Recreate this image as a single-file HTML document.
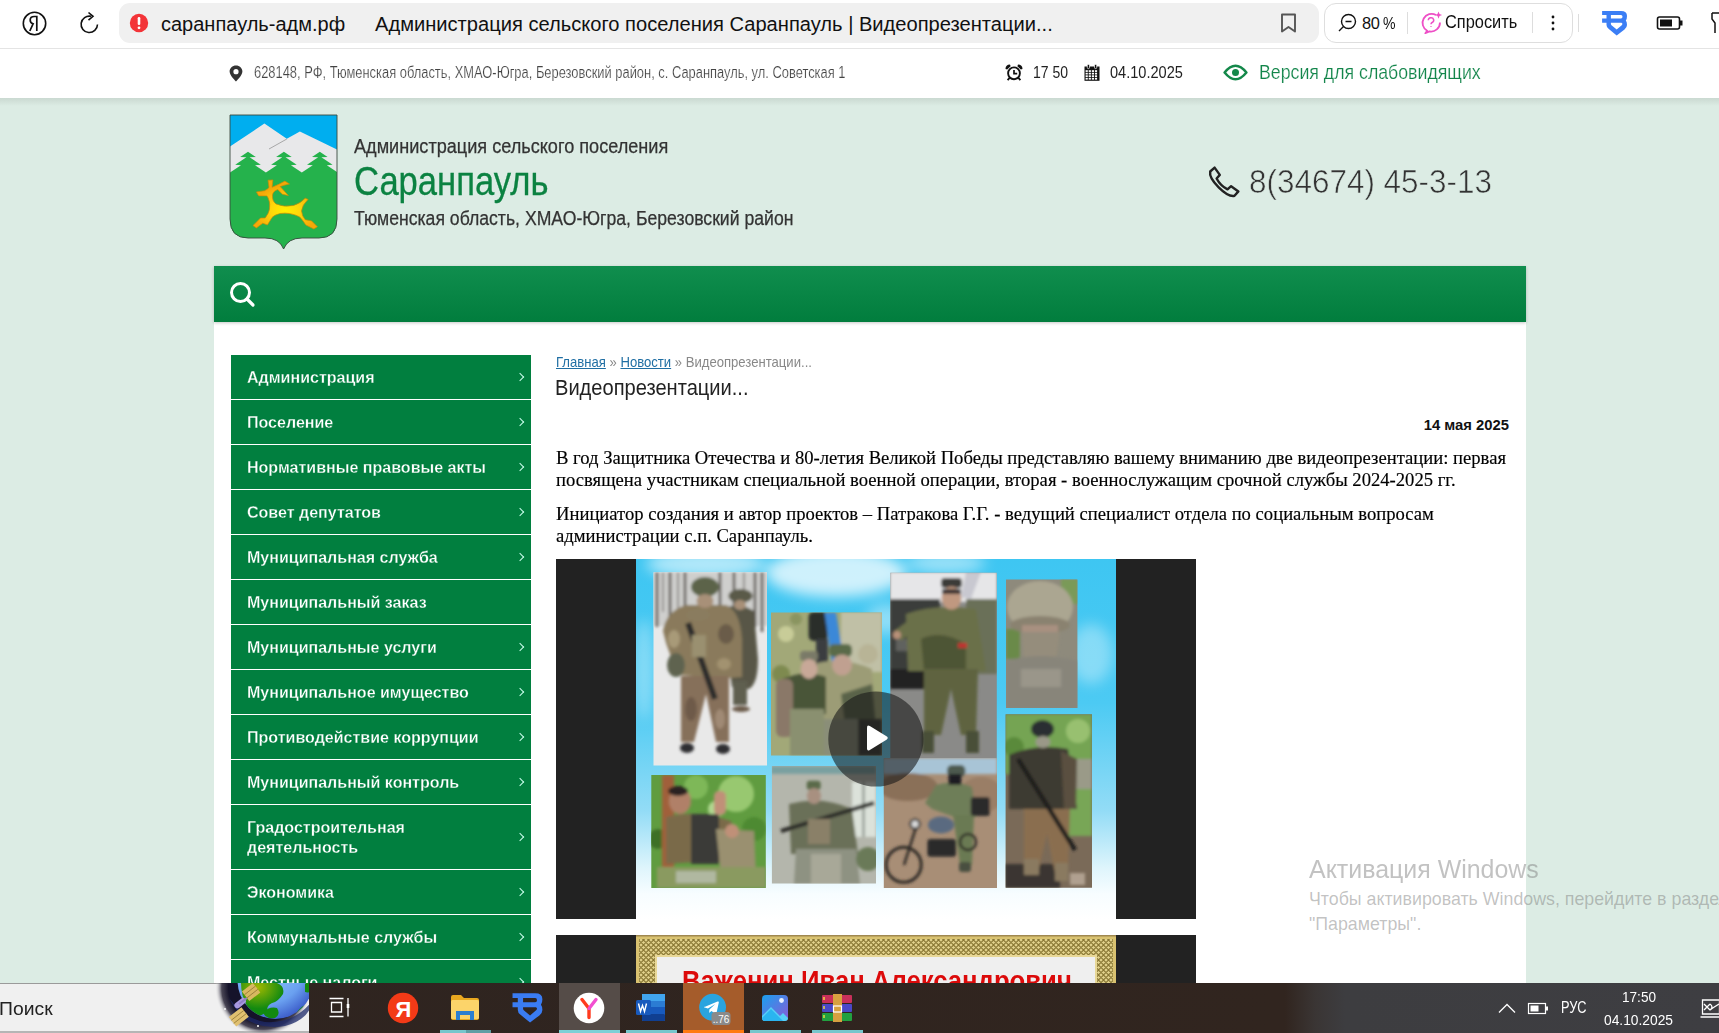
<!DOCTYPE html>
<html lang="ru"><head><meta charset="utf-8"><title>Саранпауль</title>
<style>
*{margin:0;padding:0;box-sizing:border-box}
html,body{width:1719px;height:1033px;overflow:hidden;background:#dcece4;font-family:"Liberation Sans",sans-serif;position:relative}
.a{position:absolute;white-space:nowrap}
.sx{transform-origin:0 0}
svg{display:block}
#chrome{left:0;top:0;width:1719px;height:49px;background:#fff;border-bottom:1px solid #e4e4e4}
#addr{left:119px;top:3px;width:1200px;height:40px;background:#f0f0f0;border-radius:11px}
#pill{left:1324px;top:3px;width:249px;height:40px;border:1px solid #dedede;border-radius:12px;background:#fff}
#info{left:0;top:49px;width:1719px;height:49px;background:#fff}
#ish{left:0;top:98px;width:1719px;height:8px;background:linear-gradient(#cad9d1,#dcece4)}
#nav{left:214px;top:266px;width:1312px;height:56px;background:linear-gradient(#108e4e,#017d3d);box-shadow:0 1px 3px rgba(0,0,0,.22);z-index:1}
#wrap{left:214px;top:322px;width:1312px;height:700px;background:#fff}
.menu{left:231px;top:355px;width:300px}
.mi{position:relative;background:#017f3f;color:#fff;font-size:17px;font-weight:bold;height:44px;margin-bottom:1px;padding-left:16px;padding-top:13px;line-height:20px}
.mi span{display:inline-block;transform:scaleX(0.943);transform-origin:0 0;white-space:nowrap;-webkit-text-stroke:0.3px #017f3f}
.mi:after{content:"";position:absolute;right:8px;top:19px;width:5px;height:5px;border-right:1px solid #cfe;border-top:1px solid #cfe;transform:rotate(45deg)}
.mi.nochev:after{display:none}
.mi.two{height:64px;padding-top:13px}
.mi.two:after{top:29px}
.p{font-family:"Liberation Serif",serif;font-size:18px;color:#000;-webkit-text-stroke:0.15px #000;transform:scaleX(1.035);transform-origin:0 0}
#taskbar{left:0;top:983px;width:1719px;height:50px;background:linear-gradient(90deg,#2e2420 0,#31251f 1285px,#3a3534 1315px,#3d3d40 1345px,#3e3e42 100%)}
</style></head><body>
<!-- Browser chrome -->
<div id="chrome" class="a"></div>
<svg class="a" style="left:21px;top:10px" width="28" height="28" viewBox="0 0 28 28"><circle cx="13.5" cy="13.5" r="11.2" fill="none" stroke="#111" stroke-width="1.6"/><path d="M15.8 21V6.5h-2.6c-2.6 0-4 1.4-4 3.6 0 2 1.1 3.3 2.9 3.8L8.8 21" fill="none" stroke="#111" stroke-width="1.7"/></svg>
<svg class="a" style="left:77px;top:11px" width="26" height="26" viewBox="0 0 26 26"><path d="M20.5 13.5A8.2 8.2 0 1 1 14 5.3" fill="none" stroke="#111" stroke-width="1.6"/><path d="M11.5 1.5l4.5 3.8-4.5 3.8" fill="none" stroke="#111" stroke-width="1.6"/></svg>
<div id="addr" class="a"></div>
<svg class="a" style="left:129px;top:13px" width="20" height="20" viewBox="0 0 20 20"><circle cx="10" cy="10" r="9.2" fill="#f33438"/><rect x="8.7" y="4" width="2.6" height="8" rx="1.2" fill="#fff"/><circle cx="10" cy="14.8" r="1.4" fill="#fff"/></svg>
<div class="a" style="left:161px;top:13px;font-size:20px;color:#111">саранпауль-адм.рф</div>
<div class="a" style="left:375px;top:13px;font-size:20.12px;color:#111">Администрация сельского поселения Саранпауль | Видеопрезентации...</div>
<svg class="a" style="left:1279px;top:12px" width="20" height="22" viewBox="0 0 20 22"><path d="M3 2.5h13v17l-6.5-4.5L3 19.5z" fill="none" stroke="#555" stroke-width="1.9" stroke-linejoin="round"/></svg>
<div id="pill" class="a"></div>
<svg class="a" style="left:1337px;top:12px" width="22" height="22" viewBox="0 0 22 22"><circle cx="11.5" cy="9.5" r="7" fill="none" stroke="#111" stroke-width="1.4"/><path d="M8.5 9.5h6M6.5 14.5l-4.5 4.5" stroke="#111" stroke-width="1.4"/></svg>
<div class="a" style="left:1362px;top:13.5px;font-size:16.4px;color:#111;letter-spacing:-0.3px">80<span style="margin-left:3px;display:inline-block;transform:scaleX(0.86);transform-origin:0 0">%</span></div>
<div class="a" style="left:1407px;top:12px;width:1px;height:22px;background:#ddd"></div>
<svg class="a" style="left:1417px;top:9px" width="28" height="28" viewBox="0 0 28 28"><path d="M19 6A9 9 0 1 0 10.2 21.8L8.3 24.2 12.5 22.4A9 9 0 0 0 23 13.5" fill="none" stroke="#ee4fc6" stroke-width="1.8" stroke-linejoin="round"/><path d="M11.3 11.2a2.7 2.5 0 1 1 3.8 2.3c-.8.4-1.1.8-1.1 1.7M14 17.2v.9" fill="none" stroke="#ee4fc6" stroke-width="1.5"/><path d="M21.5 2.5l1 2.6 2.6 1-2.6 1-1 2.6-1-2.6-2.6-1 2.6-1z" fill="#ee4fc6"/></svg>
<div class="a sx" style="left:1445px;top:12.2px;font-size:17.7px;color:#111;transform:scaleX(0.926)">Спросить</div>
<div class="a" style="left:1532px;top:12px;width:1px;height:21px;background:#ddd"></div>
<svg class="a" style="left:1549px;top:14px" width="8" height="18" viewBox="0 0 8 18"><circle cx="4" cy="3" r="1.4" fill="#111"/><circle cx="4" cy="9" r="1.4" fill="#111"/><circle cx="4" cy="15" r="1.4" fill="#111"/></svg>
<div class="a" style="left:1578px;top:14px;width:1px;height:18px;background:#ddd"></div>
<svg class="a" style="left:1595px;top:5px" width="40" height="35" viewBox="0 0 40 35"><path fill-rule="evenodd" fill="#3b7ef5" d="M7.1,6.1H26Q32,6.1 32,11Q32,14 30.8,15.6Q32,17 32,20Q32,22.5 29.5,24.5L21.7,30.5L13.8,24Q11.5,22.5 11.5,20V17.8H7.1V13.6H11.5V10H7.1ZM15.9,10H26Q27.5,10 27.5,11.8Q27.5,13.6 26,13.6H15.9ZM15.9,17.8H26.5Q28.2,18.6 27,20L21.7,24.5L16.5,20.2Q15.9,19.6 15.9,19Z"/></svg>
<svg class="a" style="left:1656px;top:16px" width="28" height="14" viewBox="0 0 28 14"><rect x="1.5" y="1" width="22" height="12" rx="2" fill="none" stroke="#111" stroke-width="1.6"/><rect x="4" y="3.5" width="12" height="7" fill="#111"/><rect x="24" y="4.5" width="2.5" height="5" fill="#111"/></svg>
<svg class="a" style="left:1710px;top:11px" width="9" height="24" viewBox="0 0 9 24"><path d="M2 2h7M2 2v6l3 4v10" fill="none" stroke="#111" stroke-width="1.5"/></svg>

<!-- Info bar -->
<div id="info" class="a"></div>
<div id="ish" class="a"></div>
<svg class="a" style="left:229px;top:65px" width="14" height="17" viewBox="0 0 14 17"><path d="M7 0.5C3.4 0.5 0.6 3.2 0.6 6.6 0.6 10.6 7 16.5 7 16.5s6.4-5.9 6.4-9.9C13.4 3.2 10.6 0.5 7 0.5zm0 3.6a2.6 2.6 0 1 1 0 5.2 2.6 2.6 0 0 1 0-5.2z" fill="#333"/></svg>
<div class="a sx" style="left:254px;top:64.2px;font-size:16px;color:#444;transform:scaleX(0.806);-webkit-text-stroke:0.2px #fff">628148, РФ, Тюменская область, ХМАО-Югра, Березовский район, с. Саранпауль, ул. Советская 1</div>
<svg class="a" style="left:1005px;top:64px" width="18" height="17" viewBox="0 0 18 17"><circle cx="9" cy="9.3" r="5.9" fill="none" stroke="#111" stroke-width="1.9"/><path d="M9 6v3.7h3.2" fill="none" stroke="#111" stroke-width="1.7"/><path d="M0.5 5A4.6 4.6 0 0 1 5 0.5L5.6 2.2 2.2 5.6z" fill="#111"/><path d="M17.5 5A4.6 4.6 0 0 0 13 0.5L12.4 2.2 15.8 5.6z" fill="#111"/><path d="M4.6 13.8l-2 2.4M13.4 13.8l2 2.4" stroke="#111" stroke-width="1.8"/></svg>
<div class="a sx" style="left:1033px;top:64.2px;font-size:16px;color:#222;transform:scaleX(0.875)">17 50</div>
<svg class="a" style="left:1084px;top:64px" width="16" height="17" viewBox="0 0 16 17"><rect x="0.5" y="2.5" width="15" height="14.3" fill="#111"/><rect x="1.6" y="6.20" width="2.2" height="1.75" fill="#fff"/><rect x="1.6" y="8.75" width="2.2" height="1.75" fill="#fff"/><rect x="1.6" y="11.30" width="2.2" height="1.75" fill="#fff"/><rect x="1.6" y="13.85" width="2.2" height="1.75" fill="#fff"/><rect x="4.7" y="6.20" width="2.2" height="1.75" fill="#fff"/><rect x="4.7" y="8.75" width="2.2" height="1.75" fill="#fff"/><rect x="4.7" y="11.30" width="2.2" height="1.75" fill="#fff"/><rect x="4.7" y="13.85" width="2.2" height="1.75" fill="#fff"/><rect x="7.8" y="6.20" width="2.2" height="1.75" fill="#fff"/><rect x="7.8" y="8.75" width="2.2" height="1.75" fill="#fff"/><rect x="7.8" y="11.30" width="2.2" height="1.75" fill="#fff"/><rect x="7.8" y="13.85" width="2.2" height="1.75" fill="#fff"/><rect x="10.9" y="6.20" width="2.2" height="1.75" fill="#fff"/><rect x="10.9" y="8.75" width="2.2" height="1.75" fill="#fff"/><rect x="10.9" y="11.30" width="2.2" height="1.75" fill="#fff"/><rect x="10.9" y="13.85" width="2.2" height="1.75" fill="#fff"/><rect x="3.3" y="0.4" width="2.2" height="4.2" rx="1" fill="#111" stroke="#fff" stroke-width="0.7"/><rect x="10.5" y="0.4" width="2.2" height="4.2" rx="1" fill="#111" stroke="#fff" stroke-width="0.7"/></svg>
<div class="a sx" style="left:1110px;top:64.2px;font-size:16px;color:#222;transform:scaleX(0.91)">04.10.2025</div>
<svg class="a" style="left:1223px;top:64px" width="25" height="17" viewBox="0 0 25 17"><path d="M1.6 8.5Q12.5 -5 23.4 8.5Q12.5 22 1.6 8.5z" fill="none" stroke="#14884a" stroke-width="2.5" stroke-linejoin="round"/><circle cx="12.5" cy="8.5" r="3.5" fill="#14884a"/></svg>
<div class="a sx" style="left:1259px;top:61px;font-size:20.3px;color:#12854a;transform:scaleX(0.874);-webkit-text-stroke:0.2px #fff">Версия для слабовидящих</div>

<!-- Header -->
<svg class="a" style="left:229px;top:114px" width="110" height="137" viewBox="-1 -1 110 137">
<defs><clipPath id="sh"><path d="M0,0H107V104Q107,123 89,123H72Q58,123 53.6,134Q49.5,123 35,123H18Q0,123 0,104Z"/></clipPath>
<radialGradient id="gold" cx="0.5" cy="0.62" r="0.5"><stop offset="0" stop-color="#fff000"/><stop offset="0.45" stop-color="#ffd60a"/><stop offset="1" stop-color="#f5a808"/></radialGradient></defs>
<g clip-path="url(#sh)">
<rect x="0" y="0" width="108" height="136" fill="#25b24c"/>
<rect x="0" y="0" width="108" height="60" fill="#00aeef"/>
<path d="M0,31.4L34.4,8.6L56.8,23.7L69.9,16.6L108,35V60H0Z" fill="#e8e8ea"/>
<path d="M39,34L56.8,24" stroke="#7a7a7a" stroke-width="0.6"/>
<path d="M0,57.4 L11.0,50.2 L5.2,49.7 L16.4,42.3 L10.2,42.1 L18.0,36.7 L25.8,42.1 L19.6,42.3 L30.8,49.7 L25.0,50.2 L35.9,57.4 L46.9,50.2 L41.1,49.7 L52.3,42.3 L46.1,42.1 L53.9,36.7 L61.7,42.1 L55.5,42.3 L66.7,49.7 L60.9,50.2 L71.8,57.4 L82.8,50.2 L77.0,49.7 L88.2,42.3 L82.0,42.1 L89.8,36.7 L97.6,42.1 L91.4,42.3 L102.6,49.7 L96.8,50.2 L107.7,57.4 L108,57 V136 H0 Z" fill="#25b24c"/>
</g>
<path d="M0,0H107V104Q107,123 89,123H72Q58,123 53.6,134Q49.5,123 35,123H18Q0,123 0,104Z" fill="none" stroke="#3b4a3f" stroke-width="0.9"/>
<path d="M26.4,76.9L34.5,75.7Q38,74 39,72.5L38,65.2L42.9,64.9L42.1,72.2Q48,70 54.9,66.1L59.5,69Q54,70 50.2,71.6L58.4,80.6L52.5,79.2Q49,76 47.9,74.5Q43,76 42.5,80Q42,86 46,89Q54,92.5 63.6,90.5Q71,88 75.2,83.2L78.1,84.4Q72,90 71.5,96Q72,101 75.2,104.7L81.6,105.9L87.4,111.7L83.9,114L75.8,110Q72,104 69.4,101.8Q60,97 50.2,98.5Q44,100 42.1,102.4L37.4,110L32.8,108.2L26.4,112.9L22.9,110.6L30.5,103L35.1,103Q39,98 39.5,94Q40,88 39.2,86.1Q38,82 36.9,80.9L28.7,80.9Z" fill="url(#gold)" stroke="#c98a06" stroke-width="0.7" stroke-linejoin="round"/>
</svg>
<div class="a sx" style="left:353.9px;top:135.3px;font-size:19.4px;color:#333;transform:scaleX(0.934);-webkit-text-stroke:0.25px #333">Администрация сельского поселения</div>
<div class="a sx" style="left:353.9px;top:158.6px;font-size:40px;color:#0b8241;transform:scaleX(0.865);-webkit-text-stroke:0.3px #0b8241">Саранпауль</div>
<div class="a sx" style="left:353.9px;top:207px;font-size:19.4px;color:#333;transform:scaleX(0.909);-webkit-text-stroke:0.25px #333">Тюменская область, ХМАО-Югра, Березовский район</div>
<svg class="a" style="left:1206px;top:165px" width="35" height="35" viewBox="0 0 35 35"><path d="M4.2 6.5L8.6 2.6l5.2 7.3-3.2 3.6c2.3 4.4 6.5 8.6 10.9 10.9l3.6-3.2 7.3 5.2-3.9 4.4C20.5 32.6 2.4 14.5 4.2 6.5z" fill="none" stroke="#222" stroke-width="2.4" stroke-linejoin="round"/></svg>
<div class="a sx" style="left:1249px;top:162.8px;font-size:32.9px;color:#333;font-weight:normal;transform:scaleX(0.956);-webkit-text-stroke:0.6px #dcece4">8(34674) 45-3-13</div>

<!-- Nav -->
<div id="nav" class="a"></div>
<svg class="a" style="left:228px;top:280px;z-index:2" width="28" height="28" viewBox="0 0 28 28"><circle cx="12.5" cy="12.5" r="9" fill="none" stroke="#fff" stroke-width="3"/><path d="M19 19l6 6" stroke="#fff" stroke-width="3.2" stroke-linecap="round"/></svg>

<!-- Content wrap -->
<div id="wrap" class="a"></div>
<div class="a menu">
<div class="mi"><span>Администрация</span></div>
<div class="mi"><span>Поселение</span></div>
<div class="mi"><span>Нормативные правовые акты</span></div>
<div class="mi"><span>Совет депутатов</span></div>
<div class="mi"><span>Муниципальная служба</span></div>
<div class="mi nochev"><span>Муниципальный заказ</span></div>
<div class="mi"><span>Муниципальные услуги</span></div>
<div class="mi"><span>Муниципальное имущество</span></div>
<div class="mi"><span>Противодействие коррупции</span></div>
<div class="mi"><span>Муниципальный контроль</span></div>
<div class="mi two"><span>Градостроительная<br>деятельность</span></div>
<div class="mi"><span>Экономика</span></div>
<div class="mi"><span>Коммунальные службы</span></div>
<div class="mi"><span>Местные налоги</span></div>
</div>

<div class="a sx" style="left:556px;top:354px;font-size:13.9px;color:#888;transform:scaleX(0.943)"><span style="color:#1f6ea3;text-decoration:underline">Главная</span> » <span style="color:#1f6ea3;text-decoration:underline">Новости</span> » Видеопрезентации...</div>
<div class="a sx" style="left:555px;top:376.2px;font-size:21.3px;color:#222;transform:scaleX(0.943)">Видеопрезентации...</div>
<div class="a" style="right:210px;top:417.2px;font-size:14.8px;font-weight:bold;color:#111">14 мая 2025</div>
<div class="a p" style="left:556px;top:447.8px">В год Защитника Отечества и 80-летия Великой Победы представляю вашему вниманию две видеопрезентации: первая</div>
<div class="a p" style="left:556px;top:469.8px">посвящена участникам специальной военной операции, вторая - военнослужащим срочной службы 2024-2025 гг.</div>
<div class="a p" style="left:556px;top:504.2px">Инициатор создания и автор проектов – Патракова Г.Г. - ведущий специалист отдела по социальным вопросам</div>
<div class="a p" style="left:556px;top:526.1px">администрации с.п. Саранпауль.</div>

<!-- Video 1 -->
<div class="a" style="left:556px;top:559px;width:640px;height:360px;background:#222"></div>
<svg class="a" style="left:636px;top:559px" width="480" height="360" viewBox="0 0 480 360">
<defs>
<linearGradient id="sky" x1="0" y1="0" x2="0" y2="1"><stop offset="0" stop-color="#3ec6f2"/><stop offset="0.4" stop-color="#4ccaf3"/><stop offset="0.7" stop-color="#93dcf6"/><stop offset="0.86" stop-color="#dff5fc"/><stop offset="0.93" stop-color="#f7fdff"/><stop offset="1" stop-color="#ffffff"/></linearGradient>
<filter id="bl" x="-20%" y="-20%" width="140%" height="140%"><feGaussianBlur stdDeviation="1.6"/></filter>
<filter id="bl2" x="-50%" y="-50%" width="200%" height="200%"><feGaussianBlur stdDeviation="7"/></filter>
<clipPath id="c1"><rect x="17.5" y="13.3" width="113.5" height="193.2"/></clipPath>
<clipPath id="c2"><rect x="135" y="53.4" width="111" height="143"/></clipPath>
<clipPath id="c3"><rect x="254.3" y="13.7" width="106.5" height="185.2"/></clipPath>
<clipPath id="c4"><rect x="370" y="20.6" width="71.4" height="128.4"/></clipPath>
<clipPath id="c5"><rect x="15.3" y="216" width="114.5" height="113"/></clipPath>
<clipPath id="c6"><rect x="135.9" y="207" width="104.1" height="117.6"/></clipPath>
<clipPath id="c7"><rect x="247.8" y="199" width="113.2" height="130"/></clipPath>
<clipPath id="c8"><rect x="369.6" y="155.3" width="86.4" height="173.4"/></clipPath>
</defs>
<rect width="480" height="360" fill="url(#sky)"/>
<g filter="url(#bl2)" fill="#fff">
<ellipse cx="70" cy="5" rx="60" ry="14" opacity=".6"/><ellipse cx="200" cy="14" rx="70" ry="24" opacity=".75"/><ellipse cx="310" cy="4" rx="40" ry="10" opacity=".5"/><ellipse cx="455" cy="95" rx="22" ry="30" opacity=".35"/><ellipse cx="8" cy="110" rx="10" ry="50" opacity=".35"/><ellipse cx="250" cy="60" rx="20" ry="15" opacity=".4"/>
</g>
<!-- photo 1 snow -->
<g clip-path="url(#c1)">
<rect x="17" y="13" width="115" height="194" fill="#e9e9e9"/>
<g filter="url(#bl)">
<rect x="17" y="13" width="115" height="54" fill="#cfcfcd"/>
<path d="M21 13v55M34 13v50M49 13v45M84 13v50M98 13v45M119 13v55M126 13v60" stroke="#5e5a55" stroke-width="2.6"/>
<path d="M27 13v40M42 13v38M108 13v40" stroke="#8a8682" stroke-width="1.8"/>
<path d="M91 48Q106 44 118 52L122 100Q122 125 113 130L96 128Q90 90 91 48z" fill="#585646"/>
<rect x="97" y="122" width="14" height="24" fill="#5e5e50"/>
<ellipse cx="105" cy="150" rx="9" ry="3" fill="#6a5a4a"/>
<path d="M27 72Q30 52 50 46L90 46Q104 52 106 80L106 118Q90 120 70 118L45 116Q32 96 27 72z" fill="#8a7a5c"/>
<path d="M45 117H93L93 183H80L70 135L58 183H45z" fill="#86705a"/>
<path d="M52 64L79 140" stroke="#2a2a2a" stroke-width="6"/><rect x="56" y="76" width="14" height="22" fill="#9a9070"/>
<ellipse cx="40" cy="106" rx="9" ry="12" fill="#5e6450"/>
<ellipse cx="90" cy="75" rx="8" ry="10" fill="#6a5c48"/><ellipse cx="38" cy="80" rx="6" ry="9" fill="#a89a78"/><ellipse cx="88" cy="105" rx="7" ry="6" fill="#a29270"/><ellipse cx="55" cy="150" rx="6" ry="12" fill="#6e5a4a"/><ellipse cx="84" cy="160" rx="5" ry="10" fill="#a08a74"/><ellipse cx="62" cy="56" rx="12" ry="6" fill="#8a7c5e"/>
<ellipse cx="104.5" cy="37" rx="12" ry="7" fill="#5a5a48"/><ellipse cx="104" cy="46" rx="6" ry="5" fill="#a89078"/>
<ellipse cx="69" cy="28" rx="14" ry="10" fill="#5c6448"/>
<ellipse cx="69" cy="42" rx="8.5" ry="7" fill="#a89078"/>
<ellipse cx="51" cy="189" rx="7" ry="5" fill="#2f2f33"/><ellipse cx="87" cy="190" rx="7" ry="5" fill="#2f2f33"/>
</g></g>
<!-- photo 2 two men -->
<g clip-path="url(#c2)">
<rect x="135" y="53" width="111" height="144" fill="#a2a878"/>
<g filter="url(#bl)">
<rect x="205" y="53" width="41" height="60" fill="#c0c0a6"/>
<circle cx="150" cy="75" r="8" fill="#c8cc98"/><circle cx="145" cy="115" r="9" fill="#7e8a50"/><circle cx="232" cy="95" r="10" fill="#b8b496"/><circle cx="160" cy="60" r="6" fill="#8a9460"/>
<rect x="172.6" y="53" width="19" height="29" rx="5" fill="#2c2e2c"/>
<rect x="180" y="80" width="12" height="30" fill="#3a3c40"/>
<path d="M188.6 53.4H200L207.5 100L196 104z" fill="#3a88d8"/>
<path d="M181 104Q210 98 236 110L240 170H181z" fill="#9c9c76"/>
<path d="M205 135L236 125L240 170L210 175z" fill="#5a6448"/>
<path d="M146 120Q170 110 190 118L190 155L148 155z" fill="#4a5438"/>
<rect x="140" y="120" width="17" height="58" rx="6" fill="#8a7868"/>
<rect x="154" y="150" width="34" height="47" fill="#8a9070"/>
<rect x="188" y="160" width="40" height="37" fill="#8a8e78"/>
<rect x="222" y="160" width="24" height="37" fill="#3a3a34"/>
<rect x="164" y="92" width="18" height="10" rx="4" fill="#7a7a68"/>
<ellipse cx="173" cy="110" rx="8.5" ry="10" fill="#c8a898"/>
<rect x="193" y="85" width="23" height="13" rx="5" fill="#5a6a48"/>
<ellipse cx="206" cy="106" rx="10" ry="10.5" fill="#c0a090"/>
</g></g>
<!-- photo 3 glasses man -->
<g clip-path="url(#c3)">
<rect x="254" y="13" width="107" height="186" fill="#8a8a88"/>
<g filter="url(#bl)">
<rect x="254" y="13" width="107" height="30" fill="#e6e6e8"/>
<path d="M330 13L345 13L335 40L325 38z" fill="#c8c8d0"/>
<rect x="254" y="40" width="50" height="88" fill="#3a3c3a"/>
<rect x="260" y="80" width="30" height="12" fill="#60625e"/>
<rect x="330" y="40" width="31" height="75" fill="#6a7058"/>
<rect x="254" y="110" width="35" height="20" fill="#222"/>
<path d="M270 55Q300 44 340 50L350 112L272 112z" fill="#6a7048"/>
<path d="M285 80Q305 70 330 85L330 112L288 112z" fill="#4e5434"/>
<path d="M258 72L275 60L280 70L265 82z" fill="#6a7048"/>
<circle cx="261" cy="76" r="4" fill="#b89078"/>
<path d="M288 110H342L340 176H325L315 130L305 176H288z" fill="#5e6440"/>
<rect x="322" y="84" width="9" height="5" fill="#c03030"/>
<rect x="286" y="172" width="12" height="22" fill="#4a5038"/><rect x="330" y="172" width="13" height="22" fill="#4a5038"/>
<rect x="305" y="19" width="21" height="10" rx="4" fill="#3a3a38"/>
<ellipse cx="315.5" cy="39" rx="10" ry="11.5" fill="#c09880"/>
<rect x="306" y="30" width="19" height="5" fill="#3a3030"/>
</g></g>
<!-- photo 4 masked -->
<g clip-path="url(#c4)">
<rect x="370" y="20" width="72" height="130" fill="#8e8a7c"/>
<g filter="url(#bl)">
<rect x="425" y="20" width="17" height="25" fill="#7a9a58"/>
<rect x="370" y="70" width="14" height="30" fill="#6a8a48"/>
<ellipse cx="404" cy="48" rx="33" ry="26" fill="#aba691"/>
<ellipse cx="404" cy="66" rx="30" ry="9" fill="#8a8270"/>
<rect x="386" y="66" width="36" height="7" fill="#a89080"/>
<path d="M386 73H424L420 100Q404 108 388 100z" fill="#958d7c"/>
<path d="M370 102Q404 92 442 102V150H370z" fill="#88857a"/>
<rect x="385" y="110" width="40" height="18" fill="#9a968a"/>
</g></g>
<!-- photo 5 V sign -->
<g clip-path="url(#c5)">
<rect x="15" y="216" width="115" height="113" fill="#609c40"/>
<g filter="url(#bl)">
<circle cx="100" cy="235" r="18" fill="#98c870"/><circle cx="60" cy="228" r="12" fill="#7eb858"/><circle cx="118" cy="270" r="12" fill="#4e8a30"/><circle cx="22" cy="280" r="10" fill="#3e7028"/><circle cx="80" cy="250" r="8" fill="#b0d890"/>
<rect x="26" y="216" width="12" height="100" fill="#a0603a"/>
<path d="M30 258Q60 250 95 262L108 300L30 305z" fill="#7a6a48"/>
<rect x="55" y="255" width="28" height="50" fill="#3a3a38"/>
<path d="M80 270L118 272L120 316L85 316z" fill="#9a9070"/>
<circle cx="96" cy="272" r="7" fill="#c09078"/>
<ellipse cx="44" cy="242" rx="11" ry="13" fill="#b08068"/>
<ellipse cx="42" cy="232" rx="10" ry="5" fill="#2a2420"/>
<rect x="78" y="232" width="12" height="24" rx="5" fill="#c09078"/>
<rect x="21" y="308" width="109" height="21" fill="#8a9a60"/>
<rect x="40" y="312" width="40" height="12" fill="#b0b8a0"/>
</g></g>
<!-- photo 6 room -->
<g clip-path="url(#c6)">
<rect x="135" y="207" width="105" height="118" fill="#b4b6ac"/>
<g filter="url(#bl)">
<rect x="135" y="207" width="105" height="8" fill="#7aa0a0"/>
<rect x="216" y="223" width="24" height="55" fill="#dce2da"/>
<rect x="226" y="223" width="3" height="55" fill="#a0a8a0"/>
<path d="M153 245Q185 236 216 250L222 295H155z" fill="#6a7058"/>
<path d="M160 290H220L224 325H158z" fill="#8e9282"/>
<rect x="175" y="295" width="30" height="30" fill="#a8a898"/>
<path d="M145 272L238 244" stroke="#2a2a28" stroke-width="4"/>
<rect x="172" y="260" width="22" height="25" fill="#8a8068"/>
<rect x="170.7" y="221.8" width="14" height="9" rx="3" fill="#5a6a48"/>
<ellipse cx="178" cy="237" rx="7" ry="8" fill="#a89080"/>
<circle cx="232" cy="300" r="12" fill="#6a7a58"/>
</g></g>
<!-- photo 7 motorcycle -->
<g clip-path="url(#c7)">
<rect x="247" y="199" width="114" height="130" fill="#a88e76"/>
<g filter="url(#bl)">
<rect x="247" y="199" width="114" height="16" fill="#a8c4d6"/>
<ellipse cx="272" cy="228" rx="30" ry="14" fill="#8a7058"/>
<ellipse cx="345" cy="236" rx="22" ry="18" fill="#9a7e66"/>
<path d="M300 226Q318 220 336 228L340 258H318L296 250L289 244z" fill="#6e7e58"/>
<path d="M317 256H338L336 306H324z" fill="#6a7a52"/>
<rect x="323" y="303" width="12" height="10" rx="3" fill="#4a5040"/>
<path d="M268 306L282 262" stroke="#2e2a26" stroke-width="2.5"/>
<circle cx="267.7" cy="305.8" r="17.5" fill="none" stroke="#2e2a26" stroke-width="3"/>
<circle cx="332" cy="283" r="8" fill="none" stroke="#2e2a26" stroke-width="2.5"/>
<rect x="291.4" y="280" width="28.6" height="17.7" rx="3" fill="#2a2a2a"/>
<ellipse cx="305" cy="266" rx="13" ry="8.5" fill="#5a6a80"/>
<circle cx="279" cy="265" r="5.5" fill="#2a2a2e"/><circle cx="279" cy="265" r="3.5" fill="#d8d8d8"/>
<rect x="334.8" y="238" width="19" height="19" rx="3" fill="#2a2a2c"/>
<rect x="311" y="206" width="18.4" height="11.7" rx="5" fill="#4e5a50"/>
<rect x="312.5" y="215" width="12.8" height="10.8" fill="#1a1a22"/>
</g></g>
<!-- photo 8 rifle soldier -->
<g clip-path="url(#c8)">
<rect x="369" y="155" width="87" height="174" fill="#7a6a58"/>
<g filter="url(#bl)">
<rect x="369" y="155" width="87" height="60" fill="#74a452"/>
<circle cx="442" cy="172" r="12" fill="#98c070"/><circle cx="378" cy="188" r="10" fill="#5a8a3a"/>
<rect x="431" y="215" width="25" height="62" fill="#78a656"/>
<rect x="436" y="200" width="20" height="30" fill="#9a9a88"/>
<rect x="369" y="305" width="55" height="24" fill="#3a3632"/>
<rect x="434" y="314" width="15" height="12" fill="#b0a090"/>
<path d="M373 196Q400 184 432 190L441 250H373z" fill="#3e3a30"/>
<path d="M425 192L441 200L440 250L428 250z" fill="#5a5040"/>
<path d="M388 250H434L432 314H419L411 275L402 314H388z" fill="#8a6e50"/>
<rect x="388" y="300" width="15" height="16" fill="#8a7a60"/><rect x="419" y="304" width="13" height="18" fill="#8a7a60"/>
<ellipse cx="406.5" cy="170" rx="11.5" ry="9" fill="#2a2e30"/>
<ellipse cx="407" cy="183" rx="7.5" ry="6" fill="#9a9888"/>
<path d="M382 200L439 291" stroke="#1a1a1a" stroke-width="4.5"/>
</g></g>
<!-- play button -->
<circle cx="239.9" cy="180" r="47.6" fill="rgba(22,22,22,0.58)"/>
<path d="M231 168.5Q231 165.5 233.8 167L250.5 177.3Q253 179 250.5 180.7L233.8 191Q231 192.5 231 189.5Z" fill="#fff"/>
</svg>

<!-- Video 2 -->
<div class="a" style="left:556px;top:935px;width:640px;height:60px;background:#222"></div>
<svg class="a" style="left:636px;top:935px" width="480" height="48" viewBox="0 0 480 48">
<defs><pattern id="orn" width="5" height="5" patternUnits="userSpaceOnUse"><rect width="5" height="5" fill="#e2d28c"/><path d="M0 2.5L2.5 0 5 2.5 2.5 5z" fill="none" stroke="#8a7834" stroke-width="1.1"/></pattern></defs>
<rect width="480" height="48" fill="#d9c270"/>
<rect x="0" y="0" width="480" height="1.5" fill="#a08850"/>
<rect x="3" y="4" width="474" height="16" fill="url(#orn)"/>
<rect x="3" y="4" width="16" height="44" fill="url(#orn)"/>
<rect x="461" y="4" width="16" height="44" fill="url(#orn)"/>
<rect x="19" y="20" width="442" height="28" fill="#e8d898"/>
<rect x="21" y="22" width="438" height="26" fill="#efefef"/>
</svg>
<div class="a sx" style="left:681.8px;top:964.7px;font-size:29px;font-weight:bold;color:#dc0a0a;transform:scaleX(0.886)">Важенин Иван Александрович</div>

<!-- Windows activation watermark -->
<div class="a sx" style="left:1309px;top:854.2px;font-size:26.4px;color:rgba(120,120,120,.45);transform:scaleX(0.945)">Активация Windows</div>
<div class="a" style="left:1309px;top:888.7px;font-size:17.8px;color:rgba(120,120,120,.45)">Чтобы активировать Windows, перейдите в раздел</div>
<div class="a" style="left:1309px;top:914.1px;font-size:17.8px;color:rgba(120,120,120,.45)">"Параметры".</div>

<!-- Taskbar -->
<div id="taskbar" class="a"></div>
<div class="a" style="left:0;top:983px;width:309px;height:50px;background:#f0f0f0;border-top:1px solid #9a9a9a;border-bottom:2px solid #b5b5b5"></div>
<div class="a sx" style="left:-1px;top:997.8px;font-size:18.8px;color:#222;transform:scaleX(1.03)">Поиск</div>
<svg class="a" style="left:205px;top:983px" width="104" height="50" viewBox="0 3 104 50">
<defs>
<radialGradient id="halo" cx="0.5" cy="0.5" r="0.5"><stop offset="0.72" stop-color="#15132a"/><stop offset="0.86" stop-color="#2a2638" stop-opacity=".85"/><stop offset="1" stop-color="#f0f0f0" stop-opacity="0"/></radialGradient>
<radialGradient id="gl" cx="0.35" cy="0.25" r="0.8"><stop offset="0" stop-color="#9ad4ff"/><stop offset="0.7" stop-color="#6aa0f0"/><stop offset="1" stop-color="#3a5ac8"/></radialGradient>
<radialGradient id="land" cx="0.4" cy="0.2" r="0.6"><stop offset="0" stop-color="#a0b800"/><stop offset="1" stop-color="#128a10"/></radialGradient>
<clipPath id="gc"><circle cx="70.4" cy="1.1" r="37.8"/></clipPath>
</defs>
<circle cx="58" cy="8" r="48" fill="url(#halo)"/>
<path d="M24 18Q40 52 80 46Q104 40 108 20Q90 44 60 42Q38 38 24 18z" fill="#1e2a6a" opacity=".75"/>
<circle cx="70.4" cy="1.1" r="37.8" fill="url(#gl)"/>
<g clip-path="url(#gc)">
<path d="M36 3Q42 -2 56 2Q64 -1 72 3Q80 6 78 14Q74 20 70 22Q62 24 62 30Q58 36 52 36Q44 34 42 26Q36 16 36 3z" fill="url(#land)"/>
<path d="M58 33Q64 26 72 28Q76 34 70 38Q62 40 58 33z" fill="#128a10"/>
<path d="M92 32Q100 22 106 26Q104 36 94 38z" fill="#128a10"/>
<path d="M100 4Q106 -2 110 6Q106 14 100 12z" fill="#128a10"/>
</g>
<g transform="rotate(-38 38 26)">
<rect x="20" y="26" width="16" height="12" fill="#e0c070"/><path d="M20 30h16M20 34h16" stroke="#8a7030" stroke-width=".7"/>
<rect x="31" y="19" width="13" height="6" rx="3" fill="#a898e0"/>
<rect x="46" y="14" width="14" height="12" fill="#d8b860"/><path d="M46 18h14M46 22h14" stroke="#8a7030" stroke-width=".7"/>
<path d="M36 22h10" stroke="#9080c8" stroke-width="2"/>
</g>
<circle cx="20" cy="29" r=".9" fill="#fff"/><circle cx="53" cy="46" r="1" fill="#fff"/>
</svg>
<svg class="a" style="left:328px;top:996px" width="22" height="22" viewBox="0 0 22 22"><path d="M1.5 2.5h14M1.5 20.5h14M3.5 6.5h10v9.5h-10z" fill="none" stroke="#fff" stroke-width="1.3"/><path d="M20 2v18.5" stroke="#fff" stroke-width="1.3"/><rect x="18.7" y="8" width="2.6" height="4" fill="#fff"/></svg>
<svg class="a" style="left:387px;top:992px" width="32" height="32" viewBox="0 0 32 32"><circle cx="16" cy="16" r="15.2" fill="#f33a17"/><text x="16.5" y="24.5" text-anchor="middle" font-family="Liberation Sans" font-weight="bold" font-size="22" fill="#fff">Я</text></svg>
<svg class="a" style="left:450px;top:994px" width="30" height="27" viewBox="0 0 30 27"><path d="M1 3a2 2 0 0 1 2-2h8l3 3h13a2 2 0 0 1 2 2v18a2 2 0 0 1-2 2H3a2 2 0 0 1-2-2z" fill="#e8a820"/><rect x="1" y="6" width="28" height="19" rx="1.5" fill="#fcd46a"/><path d="M6 26v-9h18v9h-4v-5h-10v5z" fill="#2d7fd0"/></svg>
<svg class="a" style="left:503.5px;top:985.7px" width="48" height="42" viewBox="0 0 40 35"><path fill-rule="evenodd" fill="#3a7cf3" d="M7.1,6.1H26Q32,6.1 32,11Q32,14 30.8,15.6Q32,17 32,20Q32,22.5 29.5,24.5L21.7,30.5L13.8,24Q11.5,22.5 11.5,20V17.8H7.1V13.6H11.5V10H7.1ZM15.9,10H26Q27.5,10 27.5,11.8Q27.5,13.6 26,13.6H15.9ZM15.9,17.8H26.5Q28.2,18.6 27,20L21.7,24.5L16.5,20.2Q15.9,19.6 15.9,19Z"/></svg>
<div class="a" style="left:559px;top:983px;width:61px;height:50px;background:#554c48"></div>
<svg class="a" style="left:573px;top:992px" width="32" height="32" viewBox="0 0 32 32"><circle cx="16" cy="16" r="15.3" fill="#fff"/><path d="M9 7.5L16 16.5V25.5" fill="none" stroke="#ff3a1e" stroke-width="3.4" stroke-linecap="round"/><path d="M23 7.5L16 16.5" fill="none" stroke="#f24fd0" stroke-width="3.4" stroke-linecap="round"/></svg>
<svg class="a" style="left:635px;top:993px" width="32" height="30" viewBox="0 0 32 30"><rect x="7" y="1" width="23" height="27" rx="1.5" fill="#2b7cd3"/><rect x="7" y="1" width="23" height="7" fill="#41a5ee"/><rect x="7" y="14" width="23" height="7" fill="#185abd"/><rect x="7" y="21" width="23" height="7" rx="1" fill="#103f91"/><rect x="1" y="7" width="15" height="15" rx="1.5" fill="#185abd"/><path d="M3.5 10.5l2 8 2-6 2 6 2-8" fill="none" stroke="#fff" stroke-width="1.4"/></svg>
<div class="a" style="left:683px;top:983px;width:61px;height:50px;background:#a55c2b"></div>
<svg class="a" style="left:698px;top:993px" width="36" height="34" viewBox="0 0 36 34"><circle cx="14.6" cy="14.2" r="13.4" fill="#2aa4df"/><path d="M6.5 14l13-5.5c.8-.3 1.5.2 1.3 1l-2.3 10.5c-.2.8-.9 1-1.5.5l-3.5-2.6-1.8 1.7c-.2.2-.5.1-.5-.2l.2-2.8 6-5.6-7.5 4.6-3.3-1c-.7-.2-.7-.8.1-1.1z" fill="#fff"/><rect x="13.5" y="19" width="19" height="13" rx="3.5" fill="#8a8a8a"/><text x="23" y="29.5" text-anchor="middle" font-family="Liberation Sans" font-size="10" fill="#fff">..76</text></svg>
<svg class="a" style="left:761px;top:994px" width="28" height="28" viewBox="0 0 28 28"><defs><linearGradient id="ph" x1="0" y1="0" x2="1" y2="1"><stop offset="0" stop-color="#1aa0ee"/><stop offset="1" stop-color="#8a5ad8"/></linearGradient></defs><rect x="1" y="1" width="26" height="26" rx="4" fill="url(#ph)"/><path d="M1 22l9-9 9 9 3-3 5 5v0a3 3 0 0 1-3 3H4a3 3 0 0 1-3-3z" fill="#56d0f8"/><path d="M1 24l9-9 12 12H4a3 3 0 0 1-3-3z" fill="#2ab4f0"/><circle cx="20.5" cy="6.5" r="2.4" fill="#e8f0ff"/></svg>
<svg class="a" style="left:821px;top:994px" width="32" height="28" viewBox="0 0 32 28"><rect x="1" y="1" width="30" height="8" rx="1" fill="#c8305a"/><rect x="1" y="10" width="30" height="8" rx="1" fill="#4a48c8"/><rect x="1" y="19" width="30" height="8" rx="1" fill="#22a040"/><rect x="12" y="0" width="9" height="28" fill="#d8a040"/><rect x="12.5" y="12" width="8" height="6" fill="none" stroke="#fff" stroke-width="1.2"/><path d="M3 3v3M3 12v3M3 21v3" stroke="#f0e040" stroke-width="1.4"/></svg>
<div class="a" style="left:440px;top:1030px;width:51px;height:3px;background:#77c6cc"></div>
<div class="a" style="left:466px;top:1030px;width:25px;height:3px;background:#5f9ea4"></div>
<div class="a" style="left:559px;top:1030px;width:61px;height:3px;background:#7dd0d6"></div>
<div class="a" style="left:626px;top:1030px;width:51px;height:3px;background:#77c6cc"></div>
<div class="a" style="left:683px;top:1030px;width:61px;height:3px;background:#ff7a10"></div>
<div class="a" style="left:750px;top:1030px;width:51px;height:3px;background:#77c6cc"></div>
<div class="a" style="left:812px;top:1030px;width:51px;height:3px;background:#77c6cc"></div>
<svg class="a" style="left:1497px;top:1002px" width="20" height="12" viewBox="0 0 20 12"><path d="M2 10.5L10 2.5 18 10.5" fill="none" stroke="#fff" stroke-width="1.3"/></svg>
<svg class="a" style="left:1527px;top:1002px" width="22" height="14" viewBox="0 0 22 14"><rect x="1.5" y="1.5" width="17" height="10" fill="none" stroke="#fff" stroke-width="1.2"/><rect x="3.5" y="3.5" width="8" height="6" fill="#fff"/><rect x="19" y="4.5" width="2" height="4" fill="#fff"/></svg>
<div class="a sx" style="left:1561px;top:999.4px;font-size:15.7px;color:#fff;transform:scaleX(0.814)">РУС</div>
<div class="a sx" style="left:1622px;top:988.7px;font-size:14.3px;color:#fff;transform:scaleX(0.95)">17:50</div>
<div class="a sx" style="left:1604px;top:1010.8px;font-size:15px;color:#fff;transform:scaleX(0.919)">04.10.2025</div>
<svg class="a" style="left:1700px;top:998px" width="19" height="21" viewBox="0 0 19 21"><path d="M2.5 2h17v14h-17z" fill="none" stroke="#fff" stroke-width="1.3"/><path d="M0.5 19h19" stroke="#fff" stroke-width="1.5"/><path d="M4 6l6 6M4 12l6-6M10 6q4 3 0 6M10 12q4-3 9-6" fill="none" stroke="#fff" stroke-width="1.3"/></svg>
</body></html>
